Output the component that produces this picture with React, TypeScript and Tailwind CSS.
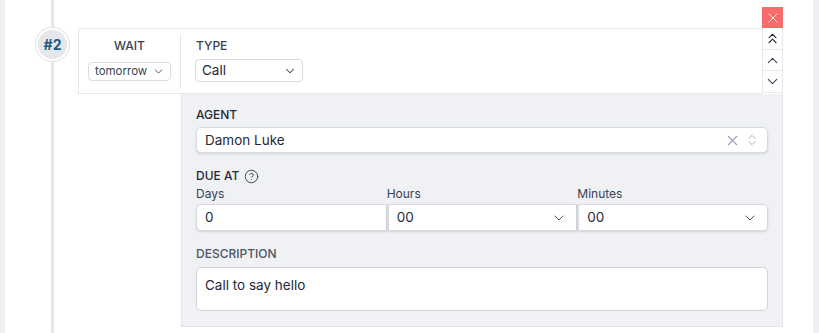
import { X, ChevronsUp, ChevronUp, ChevronDown, ChevronsUpDown, CircleHelp } from "lucide-react"

export default function App() {
  return (
    <div
      className="flex h-[333px] w-[819px] overflow-hidden bg-white text-[#1f2937]"
      style={{ fontFamily: "Inter, 'Liberation Sans', sans-serif" }}
    >
      {/* left strip */}
      <div className="w-[5px] shrink-0 bg-[#eef0f3]" />

      {/* timeline */}
      <div className="flex w-[73px] shrink-0 flex-col pl-[31px]">
        <div className="flex w-[33px] flex-1 flex-col items-center">
          <div className="h-[28px] w-[3px] bg-[#e5e7eb]" />
          <div className="flex h-[33px] w-[33px] items-center justify-center rounded-full border-2 border-white bg-[#e5e7eb] ring-1 ring-[#e0e2e6]">
            <span className="text-[14px] font-bold text-[#1d5b87]">#2</span>
          </div>
          <div className="w-[3px] flex-1 bg-[#e5e7eb]" />
        </div>
      </div>

      {/* step */}
      <div className="flex w-[705px] shrink-0 flex-col pt-[7px]">
        <div className="flex">
          {/* top card */}
          <div className="mt-[21px] flex h-[66px] flex-1 border-y border-l border-[#e5e7eb] py-[5px]">
            <div className="flex w-[102px] flex-col items-center border-r border-[#e5e7eb] pt-[4px]">
              <span className="text-[12px] font-medium leading-4 text-[#374151]">WAIT</span>
              <div className="mt-[8px] flex h-[19px] w-[83px] items-center justify-between rounded-[4px] border border-[#d9dce1] bg-white pl-[6px] pr-[5px]">
                <span className="text-[11.5px] text-[#374151]">tomorrow</span>
                <ChevronDown size={13} strokeWidth={1.75} className="text-[#4b5563]" />
              </div>
            </div>
            <div className="flex flex-col pl-[15px] pt-[4px]">
              <span className="text-[12px] font-medium leading-4 text-[#374151]">TYPE</span>
              <div className="mt-[5px] ml-[-1px] flex h-[23px] w-[108px] items-center justify-between rounded-[4px] border border-[#d9dce1] bg-white pl-[6px] pr-[5px]">
                <span className="text-[13.5px] text-[#1f2937]">Call</span>
                <ChevronDown size={14} strokeWidth={1.75} className="text-[#374151]" />
              </div>
            </div>
          </div>

          {/* controls */}
          <div className="flex w-[21px] flex-col">
            <button className="flex h-[21px] items-center justify-center bg-[#f86b6b]">
              <X size={16} strokeWidth={1.5} className="text-white/80" />
            </button>
            <button className="flex h-[22px] items-center justify-center border-x border-b border-[#e5e7eb] bg-white">
              <ChevronsUp size={17} strokeWidth={1.5} className="text-[#1f2937]" />
            </button>
            <button className="flex h-[21px] items-center justify-center border-x border-b border-[#e5e7eb] bg-white">
              <ChevronUp size={17} strokeWidth={1.5} className="text-[#374151]" />
            </button>
            <button className="flex h-[22px] items-center justify-center border-x border-b border-[#e5e7eb] bg-white">
              <ChevronDown size={17} strokeWidth={1.5} className="text-[#374151]" />
            </button>
          </div>
        </div>

        {/* details panel */}
        <div className="ml-[103px] flex flex-col border-x border-b border-[#e2e4e8] bg-[#f0f1f4] px-[14px] pb-[15px] pt-[13px]">
          <span className="text-[12px] font-medium leading-4 text-[#1f2937]">AGENT</span>
          <div className="mt-[4px] flex h-[26px] items-center justify-between rounded-[5px] border border-[#d7dade] bg-white pl-[8px] pr-[8px] shadow-sm">
            <span className="text-[13.5px] text-[#1f2937]">Damon Luke</span>
            <div className="flex items-center gap-[4px] text-[#9ca3af]">
              <X size={17} strokeWidth={1.5} />
              <ChevronsUpDown size={14} strokeWidth={1.5} />
            </div>
          </div>

          <div className="mt-[15px] flex items-center gap-[5px]">
            <span className="text-[12px] font-medium leading-4 text-[#1f2937]">DUE AT</span>
            <CircleHelp size={15} strokeWidth={1.5} className="text-[#374151]" />
          </div>
          <div className="mt-[2px] grid grid-cols-3">
            <div className="flex flex-col">
              <span className="text-[12px] leading-4 text-[#374151]">Days</span>
              <div className="mt-[2px] flex h-[27px] items-center rounded-l-[5px] border border-[#d7dade] bg-white pl-[8px] shadow-sm">
                <span className="text-[13.5px] text-[#1f2937]">0</span>
              </div>
            </div>
            <div className="flex flex-col">
              <span className="text-[12px] leading-4 text-[#374151]">Hours</span>
              <div className="mt-[2px] flex h-[27px] items-center justify-between border border-l-2 border-[#d7dade] bg-white pl-[8px] pr-[9px] shadow-sm">
                <span className="text-[13.5px] text-[#1f2937]">00</span>
                <ChevronDown size={16} strokeWidth={1.5} className="text-[#4b5563]" />
              </div>
            </div>
            <div className="flex flex-col">
              <span className="text-[12px] leading-4 text-[#374151]">Minutes</span>
              <div className="mt-[2px] flex h-[27px] items-center justify-between rounded-r-[5px] border border-l-2 border-[#d7dade] bg-white pl-[8px] pr-[9px] shadow-sm">
                <span className="text-[13.5px] text-[#1f2937]">00</span>
                <ChevronDown size={16} strokeWidth={1.5} className="text-[#4b5563]" />
              </div>
            </div>
          </div>

          <span className="mt-[15px] text-[12px] font-medium leading-4 text-[#4b5563]">DESCRIPTION</span>
          <div className="mt-[5px] h-[44px] rounded-[5px] border border-[#d1d5db] bg-white px-[8px] pt-[4px]">
            <span className="text-[13.5px] text-[#1f2937]">Call to say hello</span>
          </div>
        </div>
      </div>

      <div className="flex-1" />
      {/* right strip */}
      <div className="w-[6px] shrink-0 bg-[#eef0f3]" />
    </div>
  )
}
